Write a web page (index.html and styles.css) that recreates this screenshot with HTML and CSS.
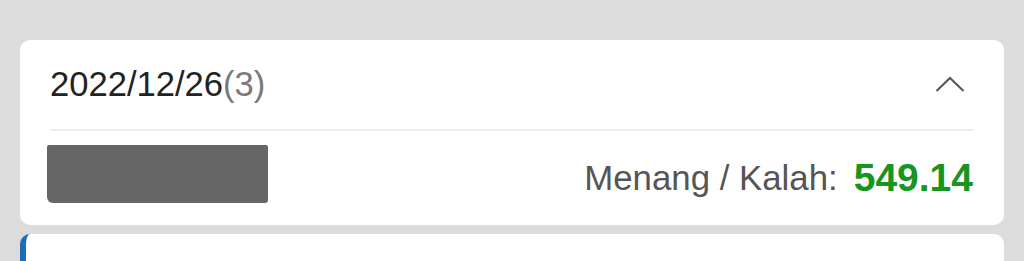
FILE: index.html
```html
<!DOCTYPE html>
<html>
<head>
<meta charset="utf-8">
<link rel="stylesheet" href="styles.css">
</head>
<body>
<div class="page">
  <section class="card">
    <div class="card-head">
      <div class="date">2022/12/26<span class="count">(3)</span></div>
      <svg class="chevron" width="30" height="16" viewBox="0 0 30 16">
        <polyline points="1.5,15 15,2 28.5,15" fill="none" stroke="#555" stroke-width="2"/>
      </svg>
    </div>
    <div class="card-row">
      <div class="redacted"></div>
      <div class="result">
        <span class="label">Menang / Kalah:</span>
        <span class="value">549.14</span>
      </div>
    </div>
  </section>
  <section class="card card-next"></section>
</div>
</body>
</html>
```
FILE: styles.css
```css
html, body {
  margin: 0;
  padding: 0;
  background: #dcdcdc;
  font-family: "Liberation Sans", Arial, Helvetica, sans-serif;
  overflow: hidden;
}
.page {
  padding: 40px 20px 0;
}
.card {
  background: #fff;
  border-radius: 10px;
  padding: 0 30px;
}
.card-head {
  height: 89px;
  display: flex;
  align-items: center;
  justify-content: space-between;
  border-bottom: 2px solid #efefef;
}
.date {
  font-size: 34.6px;
  color: #222;
}
.count {
  color: #7a7a7a;
}
.chevron {
  margin-right: 9px;
  margin-top: -2px;
  display: block;
}
.card-row {
  height: 94px;
  display: flex;
  align-items: center;
  justify-content: space-between;
}
.redacted {
  width: 221px;
  height: 58px;
  margin-left: -3px;
  margin-top: -8px;
  background: #666;
  border-radius: 2px 2px 3px 6px;
}
.result {
  display: flex;
  align-items: center;
  margin-right: 1px;
}
.label {
  font-size: 34.8px;
  color: #555;
}
.value {
  font-size: 39px;
  font-weight: bold;
  color: #16961f;
  margin-left: 16px;
}
.card-next {
  margin-top: 9px;
  height: 27px;
  border-left: 6px solid #1e6cb3;
  border-radius: 10px 10px 0 0;
  padding: 0;
}
```
